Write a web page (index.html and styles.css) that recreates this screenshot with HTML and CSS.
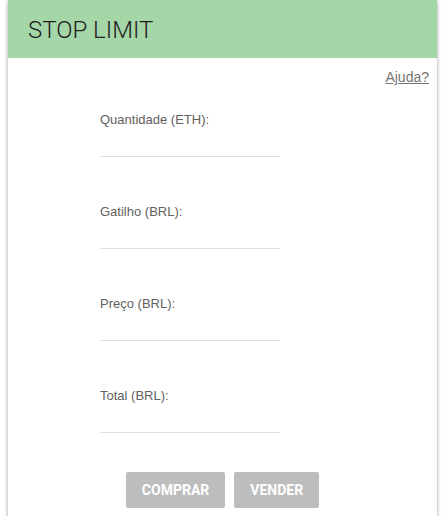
FILE: index.html
```html
<!DOCTYPE html>
<html lang="pt">
<head>
<meta charset="utf-8">
<title>Stop Limit</title>
<link rel="stylesheet" href="styles.css">
</head>
<body>
<div class="card">
  <div class="card-header">
    <h1 class="card-title">STOP LIMIT</h1>
  </div>
  <div class="card-body">
    <div class="help-row"><a class="help-link" href="#">Ajuda?</a></div>
    <form class="order-form">
      <div class="field">
        <label class="field-label">Quantidade (ETH):</label>
        <input class="field-input" type="text">
      </div>
      <div class="field">
        <label class="field-label">Gatilho (BRL):</label>
        <input class="field-input" type="text">
      </div>
      <div class="field">
        <label class="field-label">Preço (BRL):</label>
        <input class="field-input" type="text">
      </div>
      <div class="field">
        <label class="field-label">Total (BRL):</label>
        <input class="field-input" type="text">
      </div>
    </form>
    <div class="actions">
      <button class="btn" type="button">COMPRAR</button>
      <button class="btn" type="button">VENDER</button>
    </div>
  </div>
</div>
</body>
</html>
```

FILE: styles.css
```css
html, body {
  margin: 0;
  padding: 0;
  background: #ffffff;
}

body {
  padding: 0 6px 0 8px;
  font-family: "Liberation Sans", Arial, sans-serif;
}

.card {
  background: #ffffff;
  box-shadow: 0 2px 4px rgba(0, 0, 0, 0.3), 0 0 3px rgba(0, 0, 0, 0.12);
  width: 429px;
}

.card-header {
  background: #a5d6a7;
  height: 58px;
  display: flex;
  align-items: center;
  padding-left: 20px;
}

.card-title {
  margin: 0;
  font-family: Roboto, "Liberation Sans", sans-serif;
  font-weight: 300;
  font-size: 24px;
  color: #212121;
  line-height: 28px;
  padding-top: 2px;
}

.card-body {
  padding: 11px 8px 8px 8px;
}

.help-row {
  display: flex;
  justify-content: flex-end;
}

.help-link {
  font-size: 14px;
  line-height: 16px;
  color: #757575;
  text-decoration: underline;
}

.order-form {
  margin: 27px 0 0 84px;
  display: flex;
  flex-direction: column;
  gap: 47px;
}

.field {
  display: flex;
  flex-direction: column;
  width: 180px;
}

.field-label {
  font-size: 13px;
  line-height: 16px;
  color: #616161;
}

.field-input {
  border: none;
  border-bottom: 1px solid #e0e0e0;
  height: 28px;
  padding: 0;
  margin: 0;
  outline: none;
  background: transparent;
  font: inherit;
}

.actions {
  margin-top: 39px;
  display: flex;
  justify-content: center;
  gap: 9px;
}

.btn {
  height: 36px;
  padding: 0 16px;
  border: none;
  border-radius: 2px;
  background: #bdbdbd;
  color: #ffffff;
  font-family: Roboto, "Liberation Sans", sans-serif;
  font-weight: 700;
  font-size: 14px;
}
```
